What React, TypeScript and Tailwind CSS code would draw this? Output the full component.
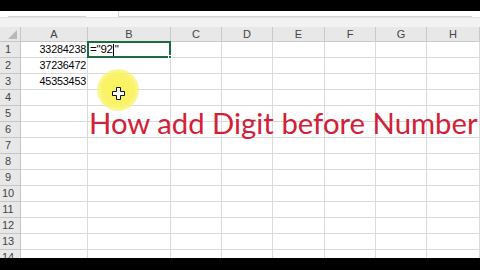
import React from "react";

const COLS = ["A", "B", "C", "D", "E", "F", "G", "H"];
const COL_W = "grid-cols-[21px_67px_83px_51px_51px_52px_51px_51px_53px]";
const ROWS = Array.from({ length: 14 }, (_, i) => i + 1);

const VALUES: Record<number, string> = {
  1: "33284238",
  2: "37236472",
  3: "45353453",
};

function Cell({ row, col }: { row: number; col: number }) {
  const selected = row === 1 && col === 1;
  return (
    <div className="relative flex h-[16px] items-center justify-end border-b border-r border-[#dadada] bg-white pr-[1px] text-[10.8px] tracking-[-0.2px] text-black">
      {col === 0 && VALUES[row] ? <span>{VALUES[row]}</span> : null}
      {selected ? (
        <div className="absolute -left-[1px] -top-[1px] z-10 flex h-[17px] w-[84px] items-center border-2 border-[#1e6b40] pl-[1px] text-[11.5px]">
          ="92
          <span className="mx-[0.5px] inline-block h-[12px] w-px bg-black" />"
          <span className="absolute -bottom-[3px] -right-[3px] h-[4px] w-[4px] border border-white bg-[#1e6b40]" />
        </div>
      ) : null}
    </div>
  );
}

export default function App() {
  return (
    <div className="relative h-[270px] w-[480px] overflow-hidden bg-black font-['Liberation_Sans',Arial,sans-serif]">
      <div className="h-[11px] bg-black" />
      <div className="flex h-[6px] gap-[6px] bg-white px-[8px]">
        <div className="w-[78px] border-b border-[#d6d6d6]" />
        <div className="w-[20px]" />
        <div className="flex-1 border-b border-l border-[#d6d6d6]" />
      </div>
      <div className="h-[10px] border-t border-[#e2e2e2] bg-[#f2f2f2]" />

      <div className={`grid ${COL_W}`}>
        <div className="flex h-[15px] items-end justify-end border-b border-r border-[#c6c6c6] bg-[#e8e8e8] pb-[2px] pr-[3px]">
          <svg width="9" height="9" viewBox="0 0 9 9">
            <path d="M9 0 L9 9 L0 9 Z" fill="#b8b8b8" />
          </svg>
        </div>
        {COLS.map((c) => (
          <div
            key={c}
            className="flex h-[15px] items-center justify-center border-b border-r border-[#c9c9c9] bg-[#e8e8e8] text-[11px] text-[#444]"
          >
            {c}
          </div>
        ))}

        {ROWS.map((r) => (
          <React.Fragment key={r}>
            <div className="flex h-[16px] items-center justify-center border-b border-r border-[#c6c6c6] bg-[#e8e8e8] pr-[4px] text-[11px] text-[#444]">
              {r}
            </div>
            {COLS.map((c, ci) => (
              <Cell key={c} row={r} col={ci} />
            ))}
          </React.Fragment>
        ))}
      </div>

      <div className="absolute left-0 top-[258px] h-[12px] w-[480px] bg-black" />

      {/* cursor highlight */}
      <div className="absolute left-[97px] top-[69px] h-[42px] w-[42px] rounded-full bg-[radial-gradient(circle,#f9f25a_0%,#faf36a_55%,rgba(250,243,106,0.45)_78%,rgba(250,243,106,0)_100%)]" />
      <svg className="absolute left-[112px] top-[87px]" width="13" height="13" viewBox="0 0 13 13">
        <path
          d="M4.5 0.5 H8.5 V4.5 H12.5 V8.5 H8.5 V12.5 H4.5 V8.5 H0.5 V4.5 H4.5 Z"
          fill="#fff"
          stroke="#111"
          strokeWidth="1"
        />
      </svg>

      <div className="absolute left-[89px] top-[103px] whitespace-nowrap font-['Lato',sans-serif] text-[29.3px] leading-[40px] text-[#d42036]">
        How add Digit before Number
      </div>
    </div>
  );
}
